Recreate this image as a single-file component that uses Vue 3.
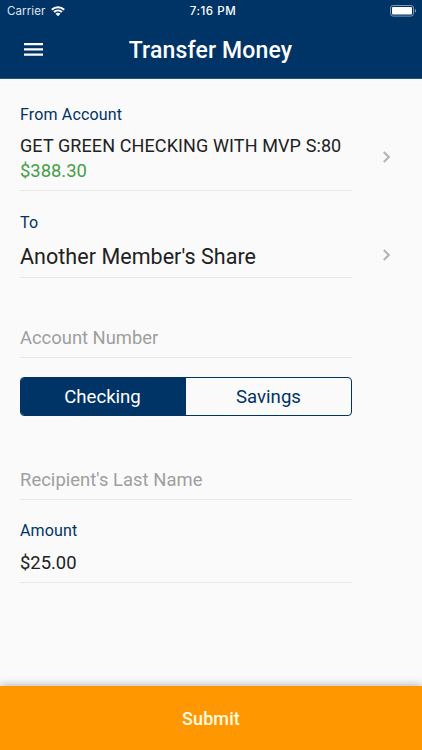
<script setup>
import { ref } from 'vue';

const accountTypes = ['Checking', 'Savings'];
const selectedType = ref('Checking');
const accountNumber = ref('');
const lastName = ref('');
</script>

<template>
  <div class="screen">
    <header class="header">
      <div class="status-bar">
        <div class="carrier">
          <span>Carrier</span>
          <svg class="wifi" viewBox="0 0 14 10">
            <path d="M0.8 3.7C4.3 0.3 9.7 0.3 13.2 3.7M3 6.1C5.3 4 8.7 4 11 6.1" />
            <path class="wifi-dot" d="M4.5 7.7C6 6.5 8 6.5 9.5 7.7L7 10.2Z" />
          </svg>
        </div>
        <span class="time">7:16 PM</span>
        <svg class="battery" viewBox="0 0 27 12">
          <rect class="battery-shell" x="0.5" y="0.5" width="23" height="10.6" rx="2.6" />
          <rect class="battery-fill" x="2" y="2" width="20" height="7.6" rx="1" />
          <path class="battery-cap" d="M24.8 3.8C26.6 4.4 26.6 7.2 24.8 7.8Z" />
        </svg>
      </div>
      <div class="nav-bar">
        <button class="menu" aria-label="Menu">
          <svg viewBox="0 0 19 13">
            <path d="M0 1.2H19M0 6.4H19M0 11.6H19" />
          </svg>
        </button>
        <h1>Transfer Money</h1>
      </div>
    </header>

    <main class="form">
      <section class="picker from">
        <div class="field">
          <label>From Account</label>
          <p class="account-name">GET GREEN CHECKING WITH MVP S:80</p>
          <p class="balance">$388.30</p>
        </div>
        <svg class="chevron" viewBox="0 0 8 12"><path d="M0.8 1L5.8 6L0.8 11" /></svg>
      </section>

      <section class="picker to">
        <div class="field">
          <label>To</label>
          <p class="target">Another Member's Share</p>
        </div>
        <svg class="chevron" viewBox="0 0 8 12"><path d="M0.8 1L5.8 6L0.8 11" /></svg>
      </section>

      <input v-model="accountNumber" class="field number" placeholder="Account Number" />

      <div class="segmented">
        <button
          v-for="type in accountTypes"
          :key="type"
          :class="{ active: type === selectedType }"
          @click="selectedType = type"
        >
          {{ type }}
        </button>
      </div>

      <input v-model="lastName" class="field recipient" placeholder="Recipient's Last Name" />

      <div class="field amount">
        <label>Amount</label>
        <p class="amount-value">$25.00</p>
      </div>
    </main>

    <button class="submit"><span>Submit</span></button>
  </div>
</template>

<style>
body {
  margin: 0;
}
</style>

<style scoped>
* {
  box-sizing: border-box;
}

.screen {
  display: flex;
  flex-direction: column;
  height: 750px;
  overflow: hidden;
  background: #fafafa;
  color: #212121;
  font-family: Roboto, sans-serif;
}

button {
  padding: 0;
  border: none;
  background: none;
  font: inherit;
  cursor: pointer;
}

.header {
  flex: none;
  height: 79px;
  background: #003366;
  border-bottom: 1px solid #2b5078;
  color: #fff;
}

.status-bar {
  display: grid;
  grid-template-columns: 1fr auto 1fr;
  align-items: center;
  height: 22px;
  padding: 0 5px 0 7px;
  font-family: Inter, sans-serif;
  font-size: 11.5px;
}

.carrier {
  display: flex;
  align-items: center;
  gap: 6px;
  color: #dfe6ee;
  letter-spacing: 0.1px;
}

.wifi {
  width: 14px;
  height: 10px;
  margin-top: -1px;
  overflow: visible;
  fill: none;
  stroke: #fff;
  stroke-width: 2;
}

.wifi-dot {
  fill: #fff;
  stroke: none;
}

.time {
  padding-left: 2px;
  font-weight: 500;
  letter-spacing: 0.55px;
}

.battery {
  justify-self: end;
  width: 27px;
  height: 12px;
}

.battery-shell {
  fill: none;
  stroke: #7f99b2;
}

.battery-fill {
  fill: #fff;
}

.battery-cap {
  fill: #7f99b2;
}

.nav-bar {
  display: grid;
  grid-template-columns: 60px 1fr 60px;
  align-items: center;
  height: 56px;
}

.menu {
  width: 19px;
  height: 13px;
  margin: 0 0 2px 24px;
}

.menu svg {
  display: block;
  stroke: #fff;
  stroke-width: 2.2;
}

h1 {
  margin: 0;
  padding: 2px 1px 0 0;
  font-size: 23px;
  font-weight: 500;
  line-height: 28px;
  letter-spacing: 0.15px;
  text-align: center;
}

.form {
  flex: 1;
  display: flex;
  flex-direction: column;
  padding: 23px 31px 0 20px;
}

.picker {
  display: flex;
  justify-content: space-between;
}

.field {
  width: 332px;
  border-bottom: 1px solid #e9e9e9;
}

label {
  display: block;
  padding-top: 1px;
  color: #003366;
  font-size: 16px;
  line-height: 24px;
  letter-spacing: 0.16px;
}

p {
  margin: 0;
  line-height: 24px;
  white-space: nowrap;
}

.from .field {
  height: 89px;
}

.account-name {
  padding-top: 7px;
  font-size: 18px;
  letter-spacing: 0.11px;
}

.balance {
  padding-top: 1px;
  color: #43a047;
  font-size: 18.4px;
}

.chevron {
  width: 8px;
  height: 12px;
  fill: none;
  stroke: #b5b5b5;
  stroke-width: 2.2;
}

.from .chevron {
  margin-top: 49px;
}

.to {
  margin-top: 19px;
}

.to .field {
  height: 68px;
}

.to .chevron {
  margin-top: 39px;
}

.target {
  padding-top: 10px;
  font-size: 21.5px;
  letter-spacing: 0.04px;
}

input.field {
  height: 40px;
  padding: 0;
  border-width: 0 0 1px;
  background: none;
  color: #212121;
  font-family: inherit;
  font-size: 18.4px;
  outline: none;
}

input::placeholder {
  color: #9e9e9e;
  opacity: 1;
}

.number {
  margin-top: 40px;
}

.segmented {
  display: grid;
  grid-template-columns: 165px 1fr;
  width: 332px;
  height: 39px;
  margin-top: 19px;
  overflow: hidden;
  border: 1px solid #003366;
  border-radius: 4px;
}

.segmented button {
  padding-top: 1px;
  color: #003366;
  font-size: 18.6px;
}

.segmented .active {
  padding-right: 2px;
  background: #003366;
  color: #fff;
}

input.recipient {
  margin-top: 44px;
  padding-bottom: 1px;
  letter-spacing: 0.05px;
}

.amount {
  height: 83px;
  padding-top: 18px;
}

.amount-value {
  padding-top: 8px;
  font-size: 18.4px;
}

.submit {
  flex: none;
  height: 64px;
  background: #ff9800;
  box-shadow: 0 -1px 8px rgba(0, 0, 0, 0.28);
  color: #fffae6;
  font-size: 18px;
  font-weight: 500;
  letter-spacing: 0.1px;
}
</style>
